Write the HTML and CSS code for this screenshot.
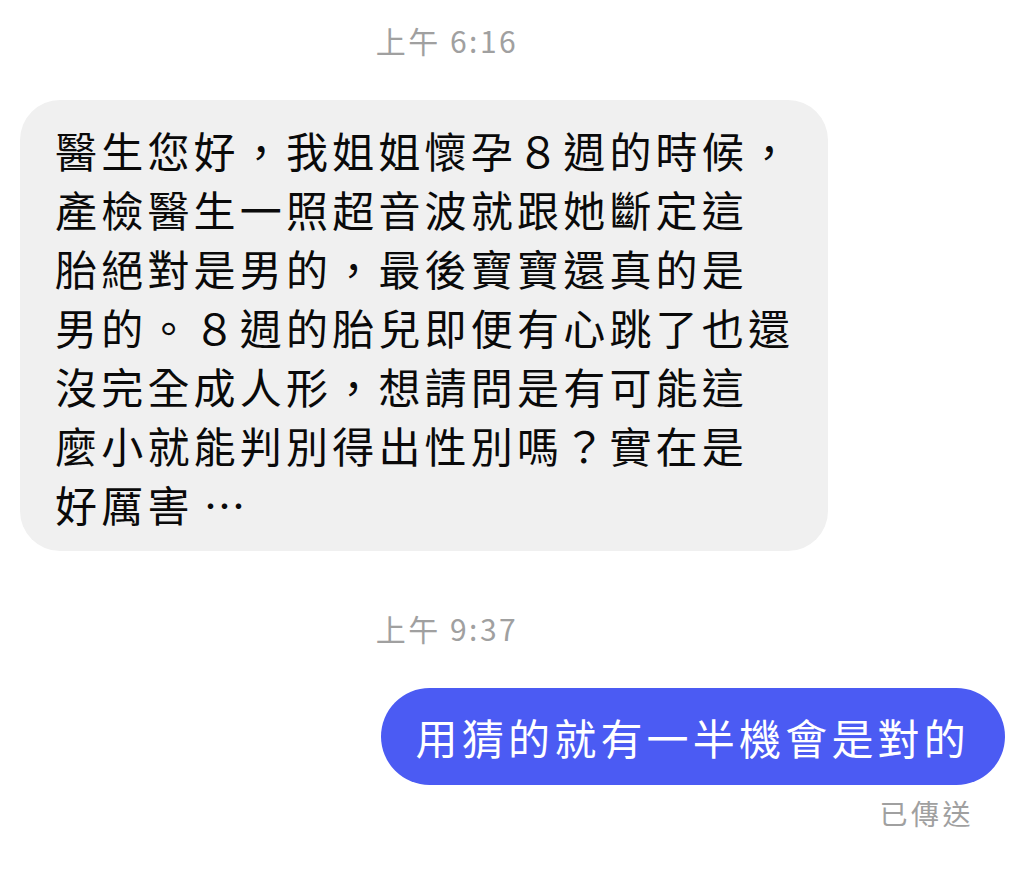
FILE: index.html
```html
<!DOCTYPE html>
<html lang="zh-Hant">
<head>
<meta charset="utf-8">
<title>Chat</title>
<link rel="stylesheet" href="styles.css">
</head>
<body>
<div class="chat">
  <div class="time">上午 6:16</div>
  <div class="row row-in">
    <div class="bubble bubble-in">醫生您好，我姐姐懷孕８週的時候，<br>產檢醫生一照超音波就跟她斷定這<br>胎絕對是男的，最後寶寶還真的是<br>男的。８週的胎兒即便有心跳了也還<br>沒完全成人形，想請問是有可能這<br>麼小就能判別得出性別嗎？實在是<br>好厲害<span class="ellipsis">⋯</span></div>
  </div>
  <div class="time time-2">上午 9:37</div>
  <div class="row row-out">
    <div class="bubble bubble-out">用猜的就有一半機會是對的</div>
  </div>
  <div class="status">已傳送</div>
</div>
</body>
</html>
```
FILE: styles.css
```css
html, body {
  margin: 0;
  padding: 0;
  background: #ffffff;
}
body {
  width: 1024px;
  height: 876px;
  overflow: hidden;
  font-family: "Noto Sans CJK TC", "Noto Sans", sans-serif;
}
.chat {
  display: flex;
  flex-direction: column;
  padding-top: 20px;
}
.time {
  width: 894px;
  text-align: center;
  font-size: 30px;
  line-height: 40px;
  letter-spacing: 2.5px;
  color: #a0a0a0;
}
.time-2 {
  margin-top: 57px;
}
.row {
  display: flex;
}
.row-in {
  justify-content: flex-start;
  padding-left: 20px;
  margin-top: 40px;
}
.row-out {
  justify-content: flex-end;
  padding-right: 19px;
  margin-top: 40px;
}
.bubble {
  font-size: 42px;
  line-height: 59px;
  letter-spacing: 4.2px;
  white-space: nowrap;
}
.ellipsis {
  margin-left: 10px;
  letter-spacing: 0;
}
.bubble-in {
  background: #f0f0f0;
  color: #0a0a0a;
  border-radius: 40px;
  padding: 20px 34px 18px 35px;
}
.bubble-out {
  background: #4b5bf3;
  color: #ffffff;
  border-radius: 49px;
  padding: 19px 35px 19px 35px;
}
.status {
  align-self: flex-end;
  margin-top: 11px;
  margin-right: 50px;
  font-size: 28px;
  line-height: 34px;
  letter-spacing: 3.5px;
  color: #a0a0a0;
}
```
